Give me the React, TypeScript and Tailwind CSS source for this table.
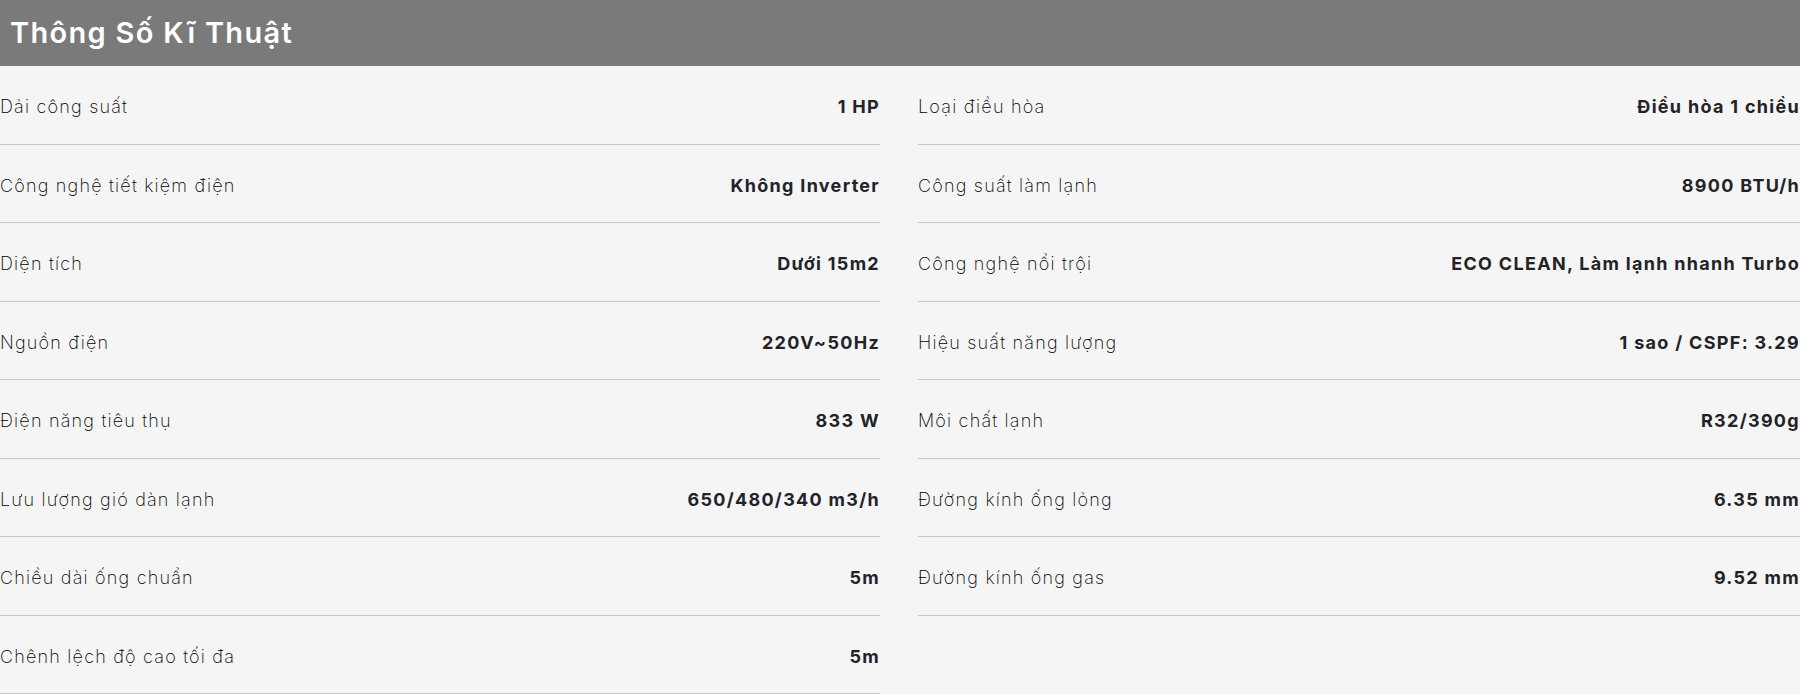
import React from "react";

const left: [string, string][] = [
  ["Dải công suất", "1 HP"],
  ["Công nghệ tiết kiệm điện", "Không Inverter"],
  ["Diện tích", "Dưới 15m2"],
  ["Nguồn điện", "220V~50Hz"],
  ["Điện năng tiêu thụ", "833 W"],
  ["Lưu lượng gió dàn lạnh", "650/480/340 m3/h"],
  ["Chiều dài ống chuẩn", "5m"],
  ["Chênh lệch độ cao tối đa", "5m"],
];

const right: [string, string][] = [
  ["Loại điều hòa", "Điều hòa 1 chiều"],
  ["Công suất làm lạnh", "8900 BTU/h"],
  ["Công nghệ nổi trội", "ECO CLEAN, Làm lạnh nhanh Turbo"],
  ["Hiệu suất năng lượng", "1 sao / CSPF: 3.29"],
  ["Môi chất lạnh", "R32/390g"],
  ["Đường kính ống lỏng", "6.35 mm"],
  ["Đường kính ống gas", "9.52 mm"],
];

function Row({ label, value }: { label: string; value: string }) {
  return (
    <div className="flex h-[78.5px] items-center justify-between border-b border-[#c9c9c9] pt-[4px] text-[18px]">
      <span className="font-extralight tracking-[1.2px] text-black">{label}</span>
      <span className="font-bold tracking-[1.3px] text-[#222327]">{value}</span>
    </div>
  );
}

export default function App() {
  return (
    <div className="min-h-[694px] w-[1800px] bg-[#f5f5f5]" style={{ fontFamily: "Inter, 'Noto Sans', sans-serif" }}>
      <div className="flex h-[66px] items-center bg-[#7a7a7a] pl-[10px]">
        <h2 className="text-[29px] font-semibold tracking-[1.3px] text-white">Thông Số Kĩ Thuật</h2>
      </div>
      <div className="flex gap-[38px]">
        <div className="w-[880px]">
          {left.map(([l, v]) => (
            <Row key={l} label={l} value={v} />
          ))}
        </div>
        <div className="flex-1">
          {right.map(([l, v]) => (
            <Row key={l} label={l} value={v} />
          ))}
        </div>
      </div>
    </div>
  );
}
